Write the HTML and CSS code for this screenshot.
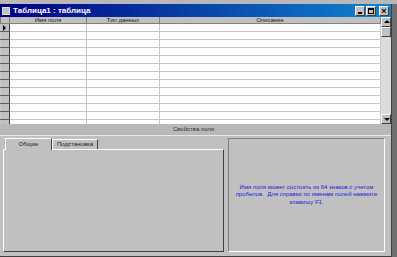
FILE: index.html
```html
<!DOCTYPE html>
<html lang="ru">
<head>
    <meta charset="UTF-8">
    <title>Таблица1 : таблица</title>
    <link rel="stylesheet" href="styles.css">
</head>
<body>
    <div class="desk-strip"></div>
    <div class="frame">
        <div class="window">
            <div class="titlebar">
                <span class="title-icon"></span>
                <span class="title-text">Таблица1 : таблица</span>
                <div class="title-buttons">
                    <span class="tbtn tbtn-min"></span>
                    <span class="tbtn tbtn-max"></span>
                    <span class="tbtn tbtn-close">×</span>
                </div>
            </div>

            <div class="design">
                <div class="grid-area">
                    <table class="grid">
                        <tr class="head">
                            <th class="sel"></th>
                            <th class="c-name">Имя поля</th>
                            <th class="c-type">Тип данных</th>
                            <th class="c-desc">Описание</th>
                        </tr>
                        <tr><td class="sel"><span class="pointer"></span></td><td></td><td></td><td></td></tr>
                        <tr><td class="sel"></td><td></td><td></td><td></td></tr>
                        <tr><td class="sel"></td><td></td><td></td><td></td></tr>
                        <tr><td class="sel"></td><td></td><td></td><td></td></tr>
                        <tr><td class="sel"></td><td></td><td></td><td></td></tr>
                        <tr><td class="sel"></td><td></td><td></td><td></td></tr>
                        <tr><td class="sel"></td><td></td><td></td><td></td></tr>
                        <tr><td class="sel"></td><td></td><td></td><td></td></tr>
                        <tr><td class="sel"></td><td></td><td></td><td></td></tr>
                        <tr><td class="sel"></td><td></td><td></td><td></td></tr>
                        <tr><td class="sel"></td><td></td><td></td><td></td></tr>
                        <tr><td class="sel"></td><td></td><td></td><td></td></tr>
                        <tr><td class="sel"></td><td></td><td></td><td></td></tr>
                    </table>
                </div>
                <div class="vscroll">
                    <span class="sbtn sbtn-up"></span>
                    <span class="thumb"></span>
                    <span class="track"></span>
                    <span class="sbtn sbtn-down"></span>
                </div>
            </div>

            <div class="props-label">Свойства поля</div>

            <div class="props">
                <div class="tabs-box">
                    <div class="tabs">
                        <span class="tab tab-active">Общие</span>
                        <span class="tab">Подстановка</span>
                    </div>
                    <div class="tab-page"></div>
                </div>
                <div class="hint">
                    <p>Имя поля может состоять из 64 знаков с учетом пробелов.&nbsp; Для справки по именам полей нажмите клавишу F1.</p>
                </div>
            </div>
            <div class="bottom-edge"></div>
        </div>
        <div class="right-edge"></div>
    </div>
</body>
</html>
```
FILE: styles.css
```css
body {
    margin: 0;
    width: 397px;
    height: 257px;
    overflow: hidden;
    background-color: #c0c0c0;
    font-family: "Liberation Sans", Arial, sans-serif;
}
.desk-strip {
    height: 4px;
    background-color: #b8b8b8;
}
.frame {
    display: flex;
    height: 253px;
}
.window {
    width: 391px;
    display: flex;
    flex-direction: column;
    background-color: #c0c0c0;
}
.right-edge {
    flex: 1;
    background-color: #707070;
    border-left: 1px solid #404040;
}
.titlebar {
    height: 13px;
    display: flex;
    align-items: center;
    background: linear-gradient(to right, #000080, #1084d0);
    color: #fff;
    padding-left: 2px;
}
.title-icon {
    width: 6px;
    height: 6px;
    background-color: #c0c0c0;
    border: 1px solid #e0e0e0;
    margin-right: 3px;
}
.title-text {
    font-size: 8px;
    font-weight: bold;
    flex: 1;
}
.title-buttons {
    display: flex;
    gap: 1px;
    margin-right: 2px;
}
.tbtn {
    width: 8px;
    height: 8px;
    background-color: #c0c0c0;
    border-top: 1px solid #fff;
    border-left: 1px solid #fff;
    border-right: 1px solid #404040;
    border-bottom: 1px solid #404040;
    position: relative;
    font-size: 9px;
    line-height: 8px;
    text-align: center;
    color: #000;
    font-weight: bold;
}
.tbtn-min::after {
    content: "";
    position: absolute;
    left: 2px;
    bottom: 1px;
    width: 4px;
    height: 2px;
    background-color: #000;
}
.tbtn-max::after {
    content: "";
    position: absolute;
    left: 1px;
    top: 1px;
    width: 4px;
    height: 3px;
    border: 1px solid #000;
    border-top-width: 2px;
}
.tbtn-close {
    margin-left: 2px;
}
.design {
    display: flex;
    height: 107px;
    background-color: #fff;
}
.grid-area {
    width: 381px;
    overflow: hidden;
}
.grid {
    border-collapse: collapse;
    table-layout: fixed;
    width: 381px;
}
.grid td,
.grid th {
    padding: 0;
    height: 7px;
    border: 1px solid #c8c8c8;
    border-top: none;
}
.grid .head th {
    height: 6px;
    background-color: #c0c0c0;
    border: 1px solid #808080;
    border-top: none;
    font-size: 6px;
    font-weight: normal;
    line-height: 6px;
    color: #202020;
    overflow: hidden;
}
.grid .sel {
    width: 8px;
    background-color: #c0c0c0;
    border-right: 1px solid #404040;
    border-bottom: 1px solid #606060;
    position: relative;
}
.c-name { width: 76px; }
.c-type { width: 72px; }
.pointer {
    position: absolute;
    left: 2px;
    top: 1px;
    width: 0;
    height: 0;
    border-top: 3px solid transparent;
    border-bottom: 3px solid transparent;
    border-left: 3px solid #000;
}
.vscroll {
    width: 10px;
    display: flex;
    flex-direction: column;
    background-color: #dcdcdc;
}
.sbtn,
.thumb {
    height: 8px;
    background-color: #c0c0c0;
    border-top: 1px solid #fff;
    border-left: 1px solid #fff;
    border-right: 1px solid #404040;
    border-bottom: 1px solid #404040;
    position: relative;
}
.track {
    flex: 1;
}
.sbtn::after {
    content: "";
    position: absolute;
    left: 2px;
    width: 0;
    height: 0;
    border-left: 3px solid transparent;
    border-right: 3px solid transparent;
}
.sbtn-up::after {
    top: 2px;
    border-bottom: 3px solid #000;
}
.sbtn-down::after {
    top: 3px;
    border-top: 3px solid #000;
}
.props-label {
    height: 11px;
    border-bottom: 1px solid #e8e8e8;
    font-size: 6px;
    line-height: 11px;
    text-align: center;
    color: #303030;
    padding-right: 4px;
    background-color: #b8b8b8;
}
.props {
    display: flex;
    flex: 1;
    padding: 2px 0 0 3px;
    gap: 4px;
}
.tabs-box {
    width: 221px;
    display: flex;
    flex-direction: column;
}
.tabs {
    display: flex;
    height: 11px;
    align-items: flex-end;
    padding-left: 2px;
}
.tab {
    height: 9px;
    padding: 0 4px;
    font-size: 6px;
    line-height: 9px;
    color: #202020;
    border-top: 1px solid #fff;
    border-left: 1px solid #fff;
    border-right: 1px solid #404040;
    background-color: #c0c0c0;
}
.tab-active {
    width: 37px;
    height: 11px;
    text-align: center;
    line-height: 11px;
    margin-bottom: -1px;
    position: relative;
    z-index: 1;
}
.tab-page {
    flex: 1;
    border-top: 1px solid #fff;
    border-left: 1px solid #fff;
    border-right: 1px solid #404040;
    border-bottom: 1px solid #404040;
}
.hint {
    width: 155px;
    display: flex;
    align-items: center;
    justify-content: center;
    border-top: 1px solid #808080;
    border-left: 1px solid #808080;
    border-right: 1px solid #fff;
    border-bottom: 1px solid #fff;
}
.hint p {
    margin: 0;
    padding: 0 3px;
    font-size: 6px;
    line-height: 7.5px;
    text-align: center;
    color: #2020e0;
}
.bottom-edge {
    height: 4px;
    border-bottom: 1px solid #404040;
}
```
